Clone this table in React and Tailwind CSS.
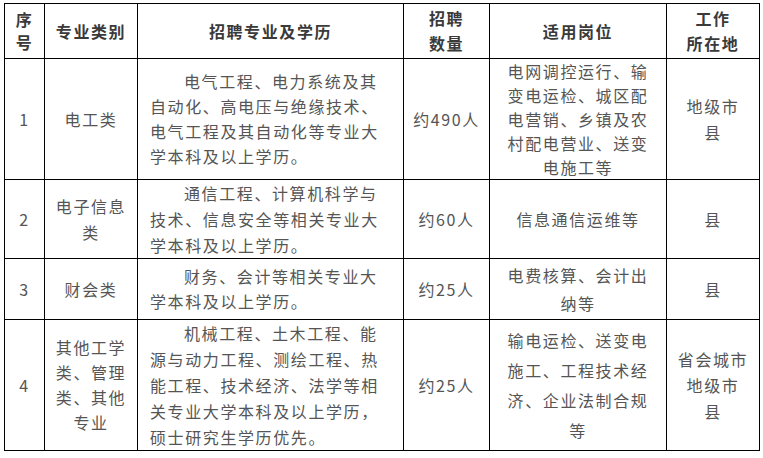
const rows = [
  {
    h: 'h-[121px]',
    no: '1',
    cat: ['电工类'],
    catLh: 'leading-[26px]',
    major: ['电气工程、电力系统及其', '自动化、高电压与绝缘技术、', '电气工程及其自动化等专业大', '学本科及以上学历。'],
    majorLh: 'leading-[25px]',
    num: '约490人',
    post: ['电网调控运行、输', '变电运检、城区配', '电营销、乡镇及农', '村配电营业、送变', '电施工等'],
    postLh: 'leading-[24px]',
    place: ['地级市', '县'],
    placeLh: 'leading-[26px]',
  },
  {
    h: 'h-[79px]',
    no: '2',
    cat: ['电子信息', '类'],
    catLh: 'leading-[26px]',
    major: ['通信工程、计算机科学与', '技术、信息安全等相关专业大', '学本科及以上学历。'],
    majorLh: 'leading-[26px]',
    num: '约60人',
    post: ['信息通信运维等'],
    postLh: 'leading-[26px]',
    place: ['县'],
    placeLh: 'leading-[26px]',
  },
  {
    h: 'h-[61px]',
    no: '3',
    cat: ['财会类'],
    catLh: 'leading-[26px]',
    major: ['财务、会计等相关专业大', '学本科及以上学历。'],
    majorLh: 'leading-[25px]',
    num: '约25人',
    post: ['电费核算、会计出', '纳等'],
    postLh: 'leading-[28px]',
    place: ['县'],
    placeLh: 'leading-[26px]',
  },
  {
    h: 'h-[131px]',
    no: '4',
    cat: ['其他工学', '类、管理', '类、其他', '专业'],
    catLh: 'leading-[25px]',
    major: ['机械工程、土木工程、能', '源与动力工程、测绘工程、热', '能工程、技术经济、法学等相', '关专业大学本科及以上学历，', '硕士研究生学历优先。'],
    majorLh: 'leading-[26px]',
    num: '约25人',
    post: ['输电运检、送变电', '施工、工程技术经', '济、企业法制合规', '等'],
    postLh: 'leading-[30px]',
    place: ['省会城市', '地级市', '县'],
    placeLh: 'leading-[26px]',
  },
];

function Lines({ lines, className }) {
  return (
    <div className={className}>
      {lines.map((l, i) => (
        <div key={i}>{l}</div>
      ))}
    </div>
  );
}

export default function App() {
  return (
    <div className="bg-white min-h-screen pl-[4px] pt-[3px] font-['Noto_Sans_CJK_SC',sans-serif] text-[16px] tracking-[1.6px]">
      <table className="border-collapse table-fixed w-[755px]">
        <colgroup>
          <col className="w-[40px]" />
          <col className="w-[93px]" />
          <col className="w-[266px]" />
          <col className="w-[86px]" />
          <col className="w-[177px]" />
          <col className="w-[93px]" />
        </colgroup>
        <thead>
          <tr className="h-[55px] text-[#3a3a3a] font-bold text-center">
            <th className="border border-black p-0">
              <Lines lines={['序', '号']} className="leading-[23px]" />
            </th>
            <th className="border border-black p-0 leading-[25px]">专业类别</th>
            <th className="border border-black p-0 leading-[25px]">招聘专业及学历</th>
            <th className="border border-black p-0">
              <Lines lines={['招聘', '数量']} className="leading-[25px]" />
            </th>
            <th className="border border-black p-0 leading-[25px]">适用岗位</th>
            <th className="border border-black p-0">
              <Lines lines={['工作', '所在地']} className="leading-[25px]" />
            </th>
          </tr>
        </thead>
        <tbody className="text-[#555555]">
          {rows.map((r) => (
            <tr key={r.no} className={r.h}>
              <td className="border border-black p-0 text-center leading-[26px]">{r.no}</td>
              <td className="border border-black p-0 text-center">
                <Lines lines={r.cat} className={r.catLh} />
              </td>
              <td className="border border-black py-0 pl-[12px] pr-0 text-left">
                <div className={r.majorLh}>
                  {r.major.map((l, i) => (
                    <div key={i} className={i === 0 ? 'pl-[34px]' : ''}>
                      {l}
                    </div>
                  ))}
                </div>
              </td>
              <td className="border border-black p-0 text-center leading-[26px]">{r.num}</td>
              <td className="border border-black p-0 text-center">
                <Lines lines={r.post} className={r.postLh} />
              </td>
              <td className="border border-black p-0 text-center">
                <Lines lines={r.place} className={r.placeLh} />
              </td>
            </tr>
          ))}
        </tbody>
      </table>
    </div>
  );
}
